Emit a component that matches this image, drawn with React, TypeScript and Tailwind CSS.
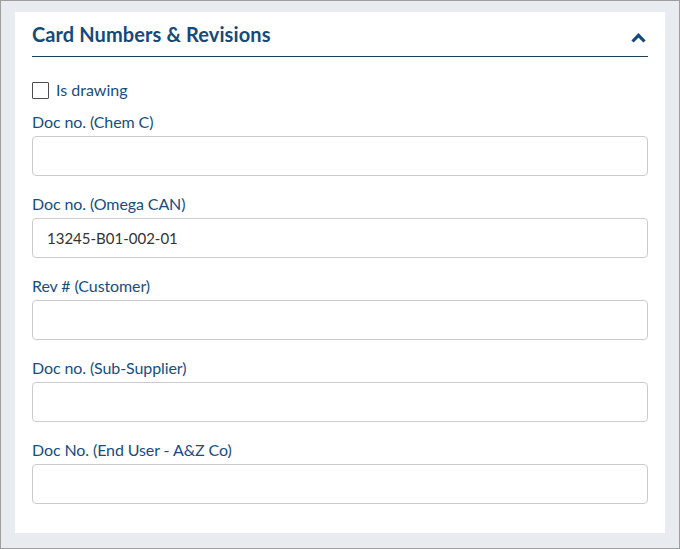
import { useState } from 'react';

const fields = [
  { label: 'Doc no. (Chem C)', value: '' },
  { label: 'Doc no. (Omega CAN)', value: '13245-B01-002-01' },
  { label: 'Rev # (Customer)', value: '' },
  { label: 'Doc no. (Sub-Supplier)', value: '' },
  { label: 'Doc No. (End User - A&Z Co)', value: '' },
];

export default function App() {
  const [isDrawing, setIsDrawing] = useState(false);

  return (
    <div className="w-[680px] h-[549px] border border-[#9f9f9f] bg-[#e8ebef] pt-[11px] px-[14px] font-['Lato',sans-serif]">
      <div className="bg-white h-[521px] px-[17px]">
        {/* Header */}
        <div className="flex items-center justify-between pt-2 pb-2 border-b border-[#1d3d5c]">
          <h2 className="text-[20px] leading-7 font-bold text-[#164a7b] tracking-[0.1px]">Card Numbers &amp; Revisions</h2>
          <svg width="15" height="11" viewBox="0 0 15 11" className="mr-[2px] mt-[6px]" aria-hidden>
            <polyline points="1.5,9.5 7.5,3.3 13.5,9.5" fill="none" stroke="#164a7b" strokeWidth="3.2" />
          </svg>
        </div>

        {/* Checkbox */}
        <label className="flex items-center gap-[7px] mt-[23px] mb-3 h-5 cursor-pointer">
          <input
            type="checkbox"
            checked={isDrawing}
            onChange={(e) => setIsDrawing(e.target.checked)}
            className="appearance-none w-[17px] h-[17px] border border-[#4d4d4d] rounded-[1px] bg-white"
          />
          <span className="text-[16px] leading-5 text-[#184d7e]">Is drawing</span>
        </label>

        {/* Fields */}
        {fields.map((f) => (
          <div key={f.label} className="mb-[18px]">
            <div className="text-[16px] leading-5 text-[#184d7e] tracking-[-0.1px] mb-1">{f.label}</div>
            <input
              type="text"
              defaultValue={f.value}
              className="w-full h-10 border border-[#cccccc] rounded-[4px] px-[14px] text-[15px] text-[#333] outline-none"
            />
          </div>
        ))}
      </div>
    </div>
  );
}
